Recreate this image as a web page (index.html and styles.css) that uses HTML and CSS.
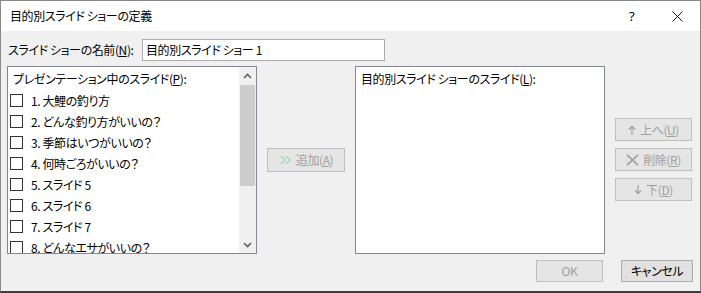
FILE: index.html
```html
<!DOCTYPE html>
<html lang="ja">
<head>
<meta charset="utf-8">
<link rel="stylesheet" href="styles.css">
</head>
<body>
<div class="window">
  <div class="titlebar">
    <span class="title">目的別スライド ショーの定義</span>
    <span class="help">?</span>
    <span class="close"><svg width="11" height="11" viewBox="0 0 11 11"><path d="M0.5 0.5 L10.5 10.5 M10.5 0.5 L0.5 10.5" stroke="#111" stroke-width="1"/></svg></span>
  </div>
  <div class="content">
    <div class="name-row">
      <label class="name-label">スライド ショーの名前(<u>N</u>):</label>
      <div class="name-input">目的別スライド ショー 1</div>
    </div>
    <div class="main">
      <div class="listbox">
        <div class="list-inner">
          <div class="list-header">プレゼンテーション中のスライド(<u>P</u>):</div>
          <div class="item"><span class="cb"></span><span>1. 大鯉の釣り方</span></div>
          <div class="item"><span class="cb"></span><span>2. どんな釣り方がいいの？</span></div>
          <div class="item"><span class="cb"></span><span>3. 季節はいつがいいの？</span></div>
          <div class="item"><span class="cb"></span><span>4. 何時ごろがいいの？</span></div>
          <div class="item"><span class="cb"></span><span>5. スライド 5</span></div>
          <div class="item"><span class="cb"></span><span>6. スライド 6</span></div>
          <div class="item"><span class="cb"></span><span>7. スライド 7</span></div>
          <div class="item"><span class="cb"></span><span>8. どんなエサがいいの？</span></div>
        </div>
        <div class="scrollbar">
          <div class="sb-btn"><svg width="9" height="6" viewBox="0 0 9 6"><path d="M1 5 L4.5 1.5 L8 5" fill="none" stroke="#606060" stroke-width="1.6"/></svg></div>
          <div class="sb-track"><div class="sb-thumb"></div></div>
          <div class="sb-btn"><svg width="9" height="6" viewBox="0 0 9 6"><path d="M1 1 L4.5 4.5 L8 1" fill="none" stroke="#606060" stroke-width="1.6"/></svg></div>
        </div>
      </div>
      <div class="add-col">
        <div class="btn disabled add-btn"><svg class="ico" width="13" height="8" viewBox="0 0 13 8"><path d="M1 0 L5 4 L1 8 L3 8 L7 4 L3 0 Z M6 0 L10 4 L6 8 L8 8 L12 4 L8 0 Z" fill="#a6d8b0"/></svg>追加(<u>A</u>)</div>
      </div>
      <div class="listbox right-list">
        <div class="list-header">目的別スライド ショーのスライド(<u>L</u>):</div>
      </div>
      <div class="side-col">
        <div class="btn disabled side-btn"><svg class="ico" width="8" height="10" viewBox="0 0 8 10"><path d="M4 0.5 L7.5 4 L6.6 4.9 L4.6 2.9 L4.6 10 L3.4 10 L3.4 2.9 L1.4 4.9 L0.5 4 Z" fill="#a0a0a0"/></svg>上へ(<u>U</u>)</div>
        <div class="btn disabled side-btn"><svg class="ico" width="13" height="12" viewBox="0 0 13 12"><path d="M1 0.8 L12 11.2 M12 0.8 L1 11.2" stroke="#a0a0a0" stroke-width="1.8"/></svg>削除(<u>R</u>)</div>
        <div class="btn disabled side-btn"><svg class="ico" width="8" height="10" viewBox="0 0 8 10"><path d="M4 9.5 L7.5 6 L6.6 5.1 L4.6 7.1 L4.6 0 L3.4 0 L3.4 7.1 L1.4 5.1 L0.5 6 Z" fill="#a0a0a0"/></svg>下(<u>D</u>)</div>
      </div>
    </div>
    <div class="footer">
      <div class="btn disabled ok-btn">OK</div>
      <div class="btn cancel-btn">キャンセル</div>
    </div>
  </div>
</div>
</body>
</html>
```

FILE: styles.css
```css
html, body {
  margin: 0;
  padding: 0;
  background: #3a3a3a;
}
body {
  font-family: "Noto Sans CJK JP", "Noto Sans", sans-serif;
  font-size: 12px;
  font-feature-settings: "palt";
  letter-spacing: -0.4px;
  color: #000;
  line-height: 1;
}
u { text-underline-offset: 1px; }
.window {
  width: 699px;
  height: 290px;
  border: 1px solid #8a8a8a;
  border-bottom-color: #3f3f3f;
  background: #f0f0f0;
  display: flex;
  flex-direction: column;
}
.titlebar {
  height: 30px;
  background: #fff;
  display: flex;
  align-items: center;
  flex-shrink: 0;
}
.title {
  margin-left: 9px;
  flex: 1;
}
.help {
  font-family: "Noto Sans", sans-serif;
  font-size: 13px;
  width: 10px;
  margin-right: 33px;
}
.close {
  display: flex;
  margin-right: 17px;
}
.content {
  padding: 8px 0 0 6px;
  flex: 1;
}
.name-row {
  display: flex;
  align-items: center;
  height: 22px;
}
.name-label {
  width: 134px;
  padding-left: 1px;
}
.name-input {
  width: 238px;
  height: 20px;
  border: 1px solid #adadad;
  background: #fff;
  padding-left: 3px;
  display: flex;
  align-items: center;
}
.main {
  margin-top: 5px;
  display: flex;
  height: 188px;
}
.listbox {
  width: 248px;
  height: 186px;
  border: 1px solid #828790;
  background: #fff;
  display: flex;
  overflow: hidden;
}
.list-inner {
  flex: 1;
  overflow: hidden;
}
.list-header {
  height: 23px;
  padding-left: 5px;
  padding-top: 1px;
  display: flex;
  align-items: center;
  box-sizing: border-box;
}
.right-list .list-header {
  padding-left: 5px;
  height: 23px;
  align-self: flex-start;
}
.item {
  height: 21px;
  display: flex;
  align-items: center;
}
.cb {
  width: 11px;
  height: 11px;
  border: 1px solid #333;
  margin-left: 2px;
  margin-right: 8px;
  flex-shrink: 0;
}
.scrollbar {
  width: 17px;
  display: flex;
  flex-direction: column;
  background: #f0f0f0;
}
.sb-btn {
  height: 17px;
  display: flex;
  align-items: center;
  justify-content: center;
}
.sb-track {
  flex: 1;
  padding-top: 1px;
}
.sb-thumb {
  height: 101px;
  background: #cdcdcd;
  margin: 0 1px;
}
.add-col {
  width: 78px;
  margin-left: 10px;
  margin-right: 10px;
  padding-top: 82px;
}
.btn {
  display: flex;
  align-items: center;
  justify-content: center;
  box-sizing: border-box;
  border: 1px solid #adadad;
  background: #e1e1e1;
}
.btn.disabled {
  border-color: #bfbfbf;
  background: #e5e5e5;
  color: #a0a0a0;
}
.ico {
  margin-right: 4px;
}
.add-btn {
  height: 24px;
  width: 78px;
}
.right-list {
  margin-right: 10px;
}
.side-col {
  padding-top: 52px;
  display: flex;
  flex-direction: column;
  gap: 7px;
}
.side-btn {
  width: 77px;
  height: 23px;
}
.footer {
  margin-top: 6px;
  display: flex;
  padding-left: 529px;
  gap: 18px;
}
.ok-btn {
  width: 67px;
  height: 22px;
}
.cancel-btn {
  width: 72px;
  height: 22px;
}
```
